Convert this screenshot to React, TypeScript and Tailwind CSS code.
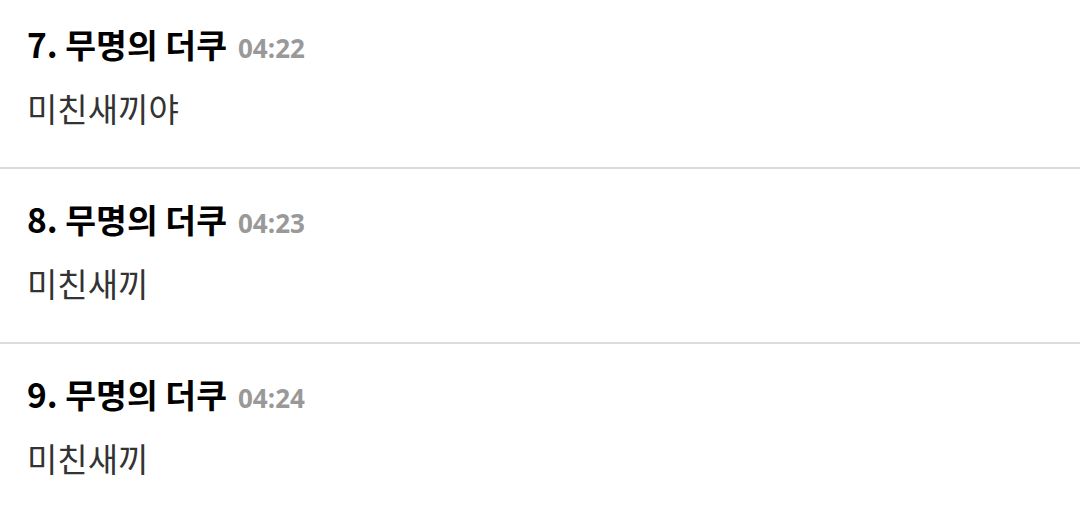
const comments = [
  { no: 7, name: "무명의 더쿠", time: "04:22", body: "미친새끼야" },
  { no: 8, name: "무명의 더쿠", time: "04:23", body: "미친새끼" },
  { no: 9, name: "무명의 더쿠", time: "04:24", body: "미친새끼" },
];

export default function App() {
  return (
    <div
      className="w-[1080px] h-[517px] overflow-hidden bg-white"
      style={{ fontFamily: '"Noto Sans CJK KR", "Noto Sans", sans-serif' }}
    >
      {comments.map((c, i) => (
        <div
          key={c.no}
          className={
            i === 0
              ? "flex flex-col pl-[27px] pt-[24px] pb-[39px] border-b-2 border-[#dcdcdc]"
              : i === comments.length - 1
              ? "flex flex-col pl-[27px] pt-[30px] pb-[39px]"
              : "flex flex-col pl-[27px] pt-[30px] pb-[39px] border-b-2 border-[#dcdcdc]"
          }
        >
          <div className="flex items-baseline h-[40px] leading-[40px]">
            <span className="text-[33.5px] font-bold text-black">
              {c.no}. {c.name}
            </span>
            <span
              className="ml-[11px] text-[26px] font-bold text-[#999999]"
              style={{ fontFamily: '"Open Sans", "Noto Sans", sans-serif' }}
            >
              {c.time}
            </span>
          </div>
          <div className="mt-[24px] h-[40px] leading-[40px] text-[33px] text-[#333333]">
            {c.body}
          </div>
        </div>
      ))}
    </div>
  );
}
